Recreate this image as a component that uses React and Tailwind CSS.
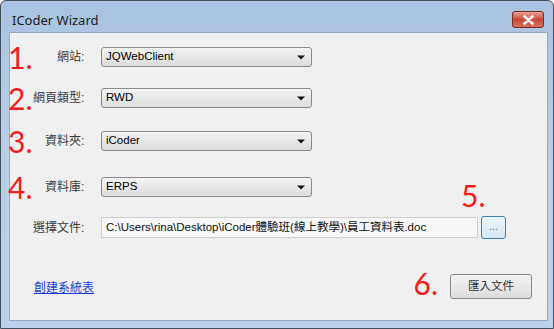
import React from "react";

const cjk = { fontFamily: '"Liberation Sans", "Noto Sans CJK TC", sans-serif' };
const num = { fontFamily: 'Lato, "Open Sans", sans-serif' };

function Arrow() {
  return (
    <svg width="8" height="5" viewBox="0 0 8 5" className="ml-auto mr-[6px]">
      <path d="M0 0.5 L8 0.5 L4 4.5 Z" fill="#111" />
    </svg>
  );
}

function Select({ value }) {
  return (
    <div className="flex items-center w-[211px] h-[20px] border border-[#8a8a8a] rounded-[3px] bg-gradient-to-b from-[#f4f4f4] to-[#dcdcdc] pl-[4px] text-[11.5px] text-black" style={cjk}>
      <span className="leading-none">{value}</span>
      <Arrow />
    </div>
  );
}

function Num({ children, className = "" }) {
  return (
    <div className={"text-[30px] leading-[30px] text-[#f41d1d] " + className} style={num}>
      {children}
    </div>
  );
}

function Row({ n, label, pl, value, mt, extra }) {
  return (
    <div className={"flex items-center h-[20px] " + mt}>
      <div className="w-[23px] -ml-[2px] mr-[2px] flex items-center">
        <Num>{n}</Num>
      </div>
      <div className="w-[68px] flex items-center">
        <span className={"text-[12px] text-[#3a3a3a] " + pl} style={cjk}>{label}</span>
      </div>
      <Select value={value} />
      {extra}
    </div>
  );
}

export default function App() {
  return (
    <div className="w-[554px] h-[329px] bg-gradient-to-b from-[#a9c2df] via-[#b9cfe8] to-[#bcd2ea] border border-[#45505e] rounded-t-[6px] flex flex-col pl-[8px] pr-[5px] pb-[7px]">
      <div className="h-[31px] flex items-start shrink-0">
        <span className="mt-[11px] ml-[3px] text-[13px] leading-[16px] text-[#1b1b1b]" style={{ fontFamily: '"Noto Sans", "Open Sans", sans-serif' }}>
          ICoder Wizard
        </span>
        <div className="ml-auto mr-[4px] mt-[10px] w-[32px] h-[17px] rounded-[3px] border border-[#7b2b26] bg-gradient-to-b from-[#e8a093] via-[#c9493b] to-[#d7705d] flex items-center justify-center">
          <svg width="11" height="10" viewBox="0 0 11 10">
            <path d="M1.5 1.5 L9.5 8.5 M9.5 1.5 L1.5 8.5" stroke="#fff" strokeWidth="2.6" strokeLinecap="round" />
          </svg>
        </div>
      </div>
      <div className="flex-1 bg-[#f0f0f0] border border-[#93a9c4] flex flex-col">
        <Row n="1." label="網站:" pl="pl-[24px]" value="JQWebClient" mt="mt-[14px]" />
        <Row n="2." label="網頁類型:" pl="pl-0" value="RWD" mt="mt-[21px]" />
        <Row n="3." label="資料夾:" pl="pl-[12px]" value="iCoder" mt="mt-[23px]" />
        <Row
          n="4."
          label="資料庫:"
          pl="pl-[12px]"
          value="ERPS"
          mt="mt-[26px]"
          extra={<Num className="ml-[149px] mt-[15px]">5.</Num>}
        />
        <div className="flex items-center h-[23px] mt-[19px]">
          <div className="w-[91px] flex items-center">
            <span className="text-[12px] text-[#3a3a3a] pl-[23px]" style={cjk}>選擇文件:</span>
          </div>
          <div className="w-[377px] h-[21px] border border-[#cfcfcf] bg-[#f7f7f7] flex items-center pl-[4px] text-[11.5px] text-[#111]" style={cjk}>
            C:\Users\rina\Desktop\iCoder體驗班(線上教學)\員工資料表.doc
          </div>
          <div className="ml-[3px] w-[25px] h-[23px] rounded-[3px] border border-[#3c7fb1] bg-gradient-to-b from-[#eef6fb] to-[#d3e7f5] flex items-center justify-center text-[10px] text-[#666] leading-none pb-[2px]" style={cjk}>
            ...
          </div>
        </div>
        <div className="flex items-center h-[25px] mt-[35px]">
          <a className="ml-[24px] mt-[3px] text-[12px] text-[#1b3fd4] underline" style={cjk}>創建系統表</a>
          <Num className="ml-auto mr-[12px] mb-[8px]">6.</Num>
          <div className="mr-[15px] w-[82px] h-[25px] rounded-[3px] border border-[#8a8a8a] bg-gradient-to-b from-[#f4f4f4] to-[#dcdcdc] flex items-center justify-center text-[11.5px] text-[#333]" style={cjk}>
            匯入文件
          </div>
        </div>
      </div>
    </div>
  );
}
